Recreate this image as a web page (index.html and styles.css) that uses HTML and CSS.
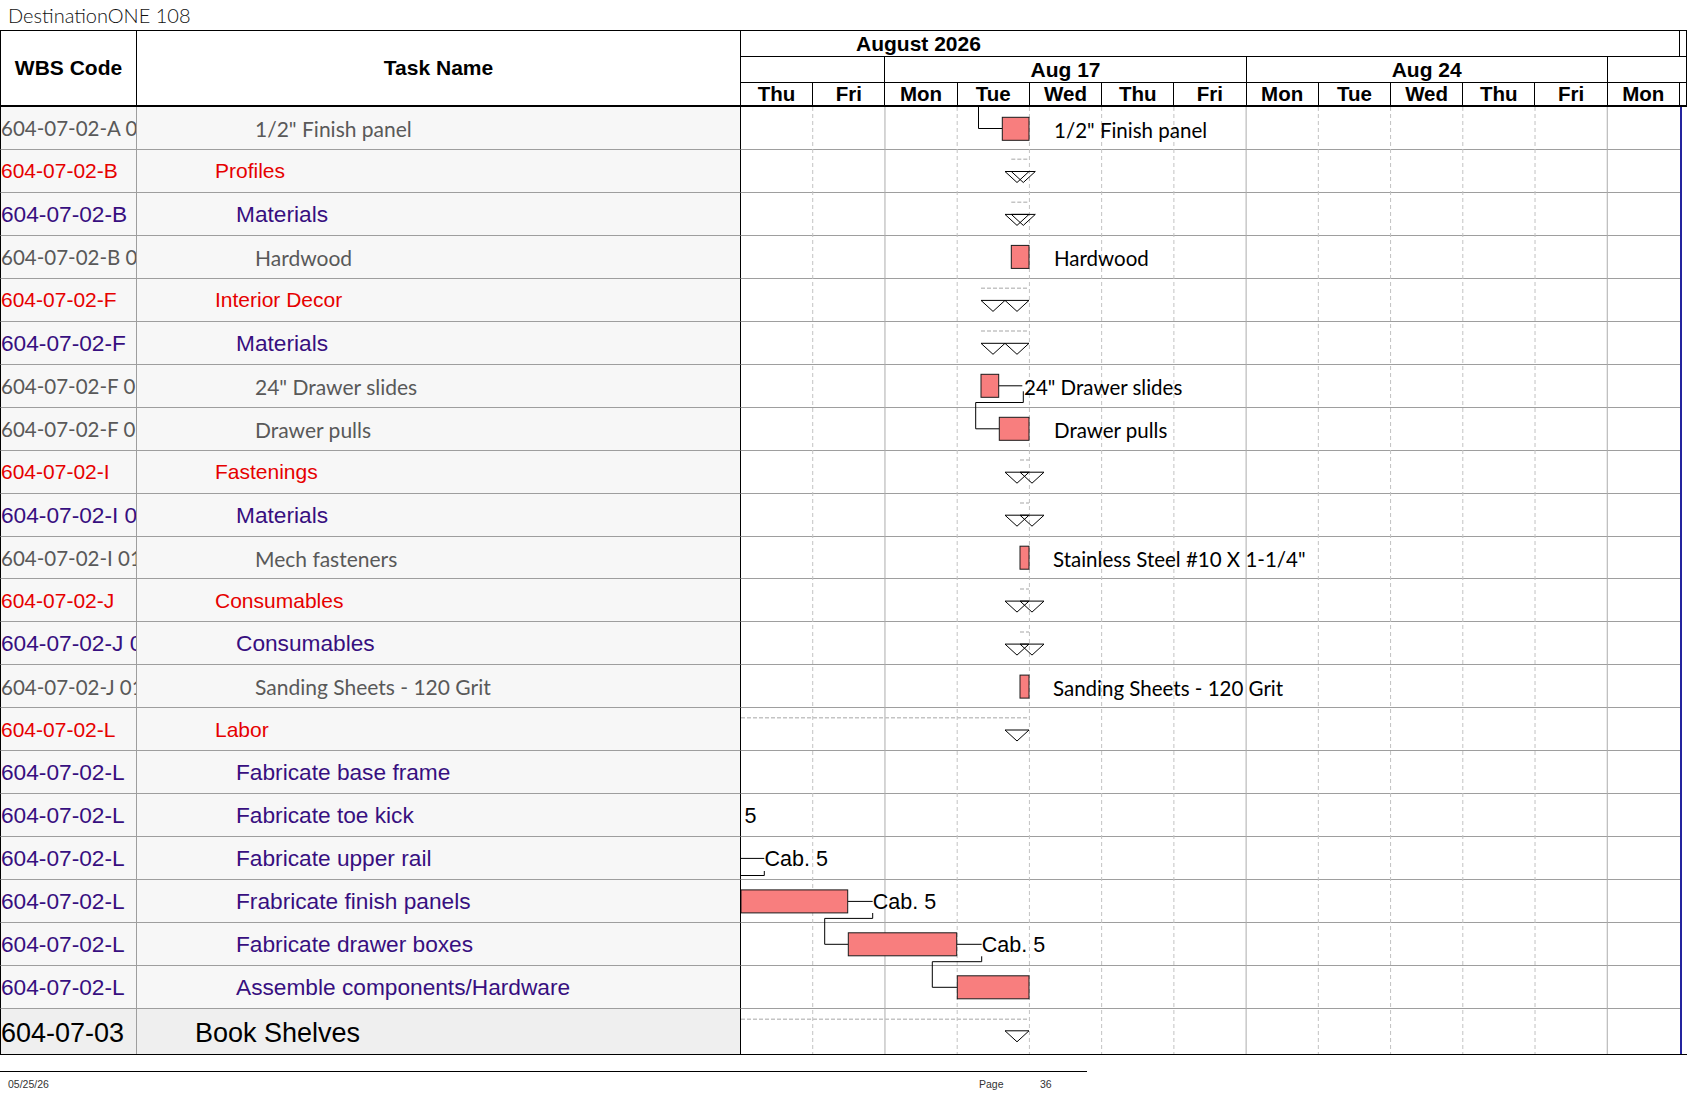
FILE: index.html
```html
<!DOCTYPE html>
<html>
<head>
<meta charset="utf-8">
<title>DestinationONE 108</title>
<link rel="stylesheet" href="styles.css">
</head>
<body>
<div class="title">DestinationONE 108</div>
<div class="gantt">
  <div class="head">
    <div class="h-wbs">WBS Code</div>
    <div class="h-task">Task Name</div>
    <div class="h-chart">
      <div class="h-month"><div class="month">August 2026</div><div class="edge"></div></div>
      <div class="h-week">
        <div class="wk w2"></div>
        <div class="wk w5">Aug 17</div>
        <div class="wk w5">Aug 24</div>
        <div class="wk wl"></div>
      </div>
      <div class="h-days">
        <div class="day">Thu</div><div class="day">Fri</div><div class="day">Mon</div><div class="day">Tue</div><div class="day">Wed</div><div class="day">Thu</div><div class="day">Fri</div><div class="day">Mon</div><div class="day">Tue</div><div class="day">Wed</div><div class="day">Thu</div><div class="day">Fri</div><div class="day">Mon</div><div class="edge"></div>
      </div>
    </div>
  </div>
  <div class="rows">
    <div class="row g"><div class="wbs">604-07-02-A 01</div><div class="task">1/2" Finish panel</div><div class="cg"></div><div class="strip"></div></div>
    <div class="row r"><div class="wbs">604-07-02-B</div><div class="task">Profiles</div><div class="cg"></div><div class="strip"></div></div>
    <div class="row p"><div class="wbs">604-07-02-B</div><div class="task">Materials</div><div class="cg"></div><div class="strip"></div></div>
    <div class="row g"><div class="wbs">604-07-02-B 01</div><div class="task">Hardwood</div><div class="cg"></div><div class="strip"></div></div>
    <div class="row r"><div class="wbs">604-07-02-F</div><div class="task">Interior Decor</div><div class="cg"></div><div class="strip"></div></div>
    <div class="row p"><div class="wbs">604-07-02-F</div><div class="task">Materials</div><div class="cg"></div><div class="strip"></div></div>
    <div class="row g"><div class="wbs">604-07-02-F 01</div><div class="task">24" Drawer slides</div><div class="cg"></div><div class="strip"></div></div>
    <div class="row g"><div class="wbs">604-07-02-F 02</div><div class="task">Drawer pulls</div><div class="cg"></div><div class="strip"></div></div>
    <div class="row r"><div class="wbs">604-07-02-I</div><div class="task">Fastenings</div><div class="cg"></div><div class="strip"></div></div>
    <div class="row p"><div class="wbs">604-07-02-I 01</div><div class="task">Materials</div><div class="cg"></div><div class="strip"></div></div>
    <div class="row g"><div class="wbs">604-07-02-I 01</div><div class="task">Mech fasteners</div><div class="cg"></div><div class="strip"></div></div>
    <div class="row r"><div class="wbs">604-07-02-J</div><div class="task">Consumables</div><div class="cg"></div><div class="strip"></div></div>
    <div class="row p"><div class="wbs">604-07-02-J 01</div><div class="task">Consumables</div><div class="cg"></div><div class="strip"></div></div>
    <div class="row g"><div class="wbs">604-07-02-J 01</div><div class="task">Sanding Sheets - 120 Grit</div><div class="cg"></div><div class="strip"></div></div>
    <div class="row r"><div class="wbs">604-07-02-L</div><div class="task">Labor</div><div class="cg"></div><div class="strip"></div></div>
    <div class="row p"><div class="wbs">604-07-02-L</div><div class="task">Fabricate base frame</div><div class="cg"></div><div class="strip"></div></div>
    <div class="row p"><div class="wbs">604-07-02-L</div><div class="task">Fabricate toe kick</div><div class="cg"></div><div class="strip"></div></div>
    <div class="row p"><div class="wbs">604-07-02-L</div><div class="task">Fabricate upper rail</div><div class="cg"></div><div class="strip"></div></div>
    <div class="row p"><div class="wbs">604-07-02-L</div><div class="task">Frabricate finish panels</div><div class="cg"></div><div class="strip"></div></div>
    <div class="row p"><div class="wbs">604-07-02-L</div><div class="task">Fabricate drawer boxes</div><div class="cg"></div><div class="strip"></div></div>
    <div class="row p"><div class="wbs">604-07-02-L</div><div class="task">Assemble components/Hardware</div><div class="cg"></div><div class="strip"></div></div>
    <div class="row b last"><div class="wbs">604-07-03</div><div class="task">Book Shelves</div><div class="cg"></div><div class="strip"></div></div>

    <svg class="chart-layer" viewBox="741 107 939 947" width="939" height="947" xmlns="http://www.w3.org/2000/svg">
      <g class="grid-dash">
        <line x1="812.73" y1="107" x2="812.73" y2="1054"/>
        <line x1="957.19" y1="107" x2="957.19" y2="1054"/>
        <line x1="1029.42" y1="107" x2="1029.42" y2="1054"/>
        <line x1="1101.65" y1="107" x2="1101.65" y2="1054"/>
        <line x1="1173.88" y1="107" x2="1173.88" y2="1054"/>
        <line x1="1318.34" y1="107" x2="1318.34" y2="1054"/>
        <line x1="1390.57" y1="107" x2="1390.57" y2="1054"/>
        <line x1="1462.8" y1="107" x2="1462.8" y2="1054"/>
        <line x1="1535.03" y1="107" x2="1535.03" y2="1054"/>
      </g>
      <g class="grid-solid">
        <line x1="884.96" y1="107" x2="884.96" y2="1054"/>
        <line x1="1246.11" y1="107" x2="1246.11" y2="1054"/>
        <line x1="1607.26" y1="107" x2="1607.26" y2="1054"/>
      </g>
      <g class="sum-line">
        <line x1="1011.3" y1="159.3" x2="1029" y2="159.3"/>
        <line x1="1011.3" y1="202.2" x2="1029" y2="202.2"/>
        <line x1="981" y1="288.2" x2="1029" y2="288.2"/>
        <line x1="981" y1="331.1" x2="1029" y2="331.1"/>
        <line x1="1020" y1="460" x2="1029" y2="460"/>
        <line x1="1020" y1="503" x2="1029" y2="503"/>
        <line x1="1020" y1="588.9" x2="1029" y2="588.9"/>
        <line x1="1020" y1="631.9" x2="1029" y2="631.9"/>
        <line x1="741" y1="717.8" x2="1029" y2="717.8"/>
        <line x1="741" y1="1019.3" x2="1029" y2="1019.3"/>
      </g>
      <g class="link">
        <path d="M978.5,107 V128.5 H1002.3"/>
        <path d="M998.7,385.8 H1022.3"/>
        <path d="M1023.3,391.3 V402.5 H975.7 V428.8 H999.3"/>
        <path d="M741,858.4 H764.3"/>
        <path d="M764.3,871 V875.5 H741"/>
        <path d="M847.7,901.4 H872.7"/>
        <path d="M872.7,913 V918.4 H824.7 V944.3 H848.3"/>
        <path d="M956.7,944.3 H981.7"/>
        <path d="M981.7,956.3 V961.7 H932.3 V987.3 H957.3"/>
      </g>
      <g class="bar">
        <rect x="1002.3" y="117.3" width="26.7" height="23"/>
        <rect x="1011.3" y="245.4" width="17.7" height="23"/>
        <rect x="981" y="374.3" width="17.7" height="23"/>
        <rect x="999.3" y="417.3" width="29.7" height="23"/>
        <rect x="1020" y="546.2" width="9" height="23"/>
        <rect x="1020" y="675.1" width="9" height="23"/>
        <rect x="741" y="889.9" width="106.7" height="23"/>
        <rect x="848.3" y="932.8" width="108.4" height="23"/>
        <rect x="957.3" y="975.8" width="71.7" height="23"/>
      </g>
      <g class="tri">
        <polygon points="1005,171.5 1029,171.5 1017,182.5"/>
        <polygon points="1011.3,171.5 1035.3,171.5 1023.3,182.5"/>
        <polygon points="1005,214.4 1029,214.4 1017,225.4"/>
        <polygon points="1011.3,214.4 1035.3,214.4 1023.3,225.4"/>
        <polygon points="981,300.4 1005,300.4 993,311.4"/>
        <polygon points="1005,300.4 1029,300.4 1017,311.4"/>
        <polygon points="981,343.3 1005,343.3 993,354.3"/>
        <polygon points="1005,343.3 1029,343.3 1017,354.3"/>
        <polygon points="1005,472.2 1029,472.2 1017,483.2"/>
        <polygon points="1020,472.2 1044,472.2 1032,483.2"/>
        <polygon points="1005,515.2 1029,515.2 1017,526.2"/>
        <polygon points="1020,515.2 1044,515.2 1032,526.2"/>
        <polygon points="1005,601.1 1029,601.1 1017,612.1"/>
        <polygon points="1020,601.1 1044,601.1 1032,612.1"/>
        <polygon points="1005,644.1 1029,644.1 1017,655.1"/>
        <polygon points="1020,644.1 1044,644.1 1032,655.1"/>
        <polygon points="1005,730 1029,730 1017,741"/>
        <polygon points="1005,1030.8 1029,1030.8 1017,1041.8"/>
      </g>
      <g class="lbl">
        <text x="1054" y="137.5">1/2" Finish panel</text>
        <text x="1054" y="266.4">Hardwood</text>
        <text x="1024" y="395.3">24" Drawer slides</text>
        <text x="1054" y="438.3">Drawer pulls</text>
        <text x="1053" y="567.2">Stainless Steel #10 X 1-1/4"</text>
        <text x="1053" y="696.1">Sanding Sheets - 120 Grit</text>
      </g>
      <g class="lbl-a">
        <text x="744.5" y="822.9">5</text>
        <text x="764.5" y="865.9">Cab. 5</text>
        <text x="872.8" y="908.9">Cab. 5</text>
        <text x="981.8" y="951.8">Cab. 5</text>
      </g>
    </svg>
  </div>
</div>
<div class="foot">
  <div class="f-date">05/25/26</div>
  <div class="f-page">Page</div>
  <div class="f-num">36</div>
</div>
</body>
</html>
```

FILE: styles.css
```css
html, body {
  margin: 0;
  padding: 0;
  background: #ffffff;
}

body {
  width: 1687px;
  height: 1097px;
  overflow: hidden;
  font-family: "Liberation Sans", Arial, sans-serif;
  color: #000;
}

.title {
  height: 30px;
  line-height: 30px;
  padding-left: 8px;
  font-family: "Lato", "Open Sans", sans-serif;
  font-weight: 300;
  font-size: 20px;
  color: #111;
  box-sizing: border-box;
}

.gantt {
  width: 1687px;
}

/* ---------- header ---------- */
.head {
  display: flex;
  height: 77px;
  box-sizing: border-box;
  border-top: 1px solid #000;
  border-bottom: 2px solid #000;
}

.h-wbs,
.h-task {
  box-sizing: border-box;
  display: flex;
  align-items: center;
  justify-content: center;
  font-weight: bold;
  font-size: 21px;
}

.h-wbs {
  width: 137px;
  border-left: 1px solid #000;
  border-right: 1px solid #000;
}

.h-task {
  width: 604px;
  border-right: 1px solid #000;
}

.h-chart {
  width: 946px;
  display: flex;
  flex-direction: column;
}

.h-month,
.h-week {
  display: flex;
  height: 26px;
  box-sizing: border-box;
  border-bottom: 1px solid #000;
}

.month {
  width: 939px;
  box-sizing: border-box;
  border-right: 1px solid #000;
  padding-left: 115px;
  display: flex;
  align-items: center;
  font-weight: bold;
  font-size: 21px;
}

.edge {
  width: 7px;
  box-sizing: border-box;
  border-right: 1px solid #000;
}

.wk {
  box-sizing: border-box;
  border-right: 1px solid #000;
  display: flex;
  align-items: center;
  justify-content: center;
  font-weight: bold;
  font-size: 21px;
}

.w2 { width: 144.46px; }
.w5 { width: 361.15px; }
.wl { width: 79.23px; }

.h-days {
  display: flex;
  height: 22px;
}

.day {
  width: 72.23px;
  box-sizing: border-box;
  border-right: 1px solid #000;
  display: flex;
  align-items: center;
  justify-content: center;
  font-weight: bold;
  font-size: 20.5px;
}

/* ---------- rows ---------- */
.rows {
  position: relative;
  border-bottom: 1px solid #000;
}

.row {
  display: flex;
  height: 42.965px;
}

.row.last {
  height: 44.73px;
}

.wbs,
.task,
.cg {
  box-sizing: border-box;
  border-bottom: 1px solid #9e9e9e;
}

.wbs {
  width: 137px;
  border-left: 1px solid #000;
  border-right: 1px solid #9e9e9e;
  background: #f7f7f7;
  display: flex;
  align-items: center;
  overflow: hidden;
  white-space: nowrap;
  padding-top: 1px;
}

.task {
  width: 604px;
  border-right: 1px solid #000;
  background: #f7f7f7;
  display: flex;
  align-items: center;
  overflow: hidden;
  white-space: nowrap;
  padding-top: 1px;
}

.cg {
  width: 939px;
  background: #fff;
}

.strip {
  width: 7px;
  box-sizing: border-box;
  border-left: 2px solid #24249e;
}

.row.last .wbs,
.row.last .task,
.row.last .cg {
  border-bottom: none;
}

/* row kinds */
.row.g .wbs,
.row.g .task {
  font-family: "Lato", "Open Sans", sans-serif;
  font-size: 21px;
  color: #595959;
}
.row.g .wbs { font-size: 20.5px; }
.row.g .task { padding-left: 118px; }

.row.r .wbs,
.row.r .task {
  font-size: 21px;
  color: #e60000;
}
.row.r .task { padding-left: 78px; }

.row.p .wbs,
.row.p .task {
  font-size: 22.7px;
  color: #370f80;
}
.row.p .task { padding-left: 99px; }

.row.b .wbs,
.row.b .task {
  font-size: 27px;
  color: #000;
  background: #efefef;
  padding-top: 4px;
}
.row.b .task { padding-left: 58px; }

/* ---------- chart overlay ---------- */
.chart-layer {
  position: absolute;
  left: 741px;
  top: 0;
  pointer-events: none;
}

.grid-dash line {
  stroke: #c2c2c2;
  stroke-width: 1;
  stroke-dasharray: 4 3;
}

.grid-solid line {
  stroke: #acacac;
  stroke-width: 1;
}

.sum-line line {
  stroke: #c4c4c4;
  stroke-width: 1.5;
  stroke-dasharray: 4 2;
}

.link path {
  stroke: #000;
  stroke-width: 1;
  fill: none;
}

.bar rect {
  fill: #f87e7e;
  stroke: #1a1a1a;
  stroke-width: 1;
}

.tri polygon {
  fill: none;
  stroke: #000;
  stroke-width: 1;
}

.lbl text {
  font-family: "Lato", "Open Sans", sans-serif;
  font-size: 20.5px;
  fill: #000;
}

.lbl-a text {
  font-family: "Liberation Sans", Arial, sans-serif;
  font-size: 21.5px;
  fill: #000;
}

/* ---------- footer ---------- */
.foot {
  margin-top: 16px;
  width: 1087px;
  border-top: 1px solid #000;
  display: flex;
  padding-top: 6px;
  font-family: "Liberation Sans", Arial, sans-serif;
  font-size: 10.5px;
  line-height: 12px;
  color: #333;
}

.f-date {
  width: 979px;
  padding-left: 8px;
  box-sizing: border-box;
}

.f-page {
  width: 61px;
}
```
